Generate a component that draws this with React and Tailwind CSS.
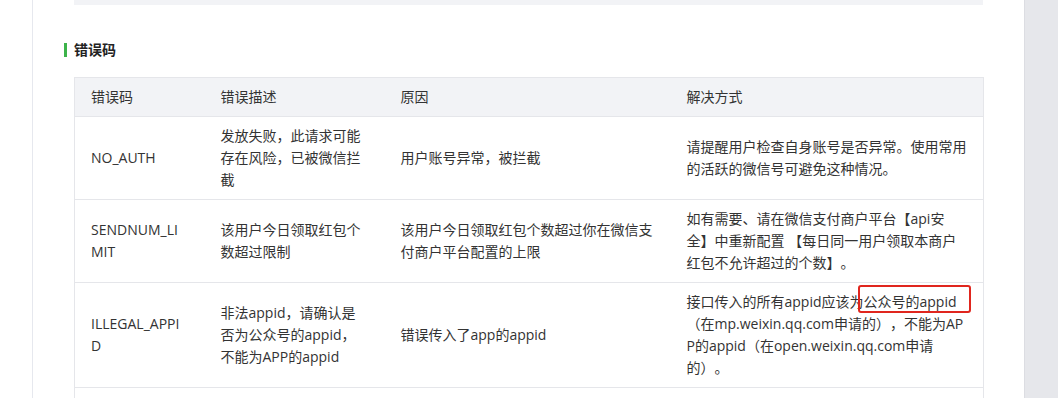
import React from 'react';

const rows = [
  {
    code: 'NO_AUTH',
    desc: '发放失败，此请求可能存在风险，已被微信拦截',
    reason: '用户账号异常，被拦截',
    fix: '请提醒用户检查自身账号是否异常。使用常用的活跃的微信号可避免这种情况。',
  },
  {
    code: 'SENDNUM_LIMIT',
    desc: '该用户今日领取红包个数超过限制',
    reason: '该用户今日领取红包个数超过你在微信支付商户平台配置的上限',
    fix: '如有需要、请在微信支付商户平台【api安全】中重新配置 【每日同一用户领取本商户红包不允许超过的个数】。',
  },
  {
    code: 'ILLEGAL_APPID',
    desc: '非法appid，请确认是否为公众号的appid，不能为APP的appid',
    reason: '错误传入了app的appid',
    fix: (
      <>
        接口传入的所有appid应该为
        <span className="relative">
          公众号的appid
          <span className="absolute -left-[6px] -right-[14px] -top-[7px] -bottom-[2px] rounded-[3px] border-2 border-[#e0261e]" />
        </span>
        （在mp.weixin.qq.com申请的），不能为APP的appid（在open.weixin.qq.com申请的）。
      </>
    ),
  },
];

const cell = 'border-y border-[#e5e6ea] px-4 py-2 align-middle break-all first:border-l last:border-r';

export default function App() {
  return (
    <div className="flex h-[398px] w-[1058px] overflow-hidden bg-white font-['Open_Sans','Noto_Sans_CJK_SC',sans-serif] text-[14px] text-[#333] [text-spacing-trim:space-all]">
      <div className="w-[32px] shrink-0" />

      {/* Main panel */}
      <div className="flex-1 border-l border-[#e6e8ee] pl-[41px] pr-[40px]">
        <div className="h-[5px] w-[909px] bg-[#f2f3f6]" />

        <div className="mt-[37px] flex items-center">
          <span className="-ml-[10px] mr-[7px] h-[14px] w-[3px] bg-[#3cb34a]" />
          <h3 className="text-[14px] font-semibold leading-[16px] text-[#222]">错误码</h3>
        </div>

        <table className="mt-[19px] w-[909px] table-fixed border-collapse leading-[22px]">
          <colgroup>
            <col className="w-[130px]" />
            <col className="w-[180px]" />
            <col className="w-[286px]" />
            <col className="w-[313px]" />
          </colgroup>
          <thead>
            <tr className="bg-[#f2f3f6] text-left">
              <th className={`${cell} font-normal`}>错误码</th>
              <th className={`${cell} font-normal`}>错误描述</th>
              <th className={`${cell} font-normal`}>原因</th>
              <th className={`${cell} font-normal`}>解决方式</th>
            </tr>
          </thead>
          <tbody>
            {rows.map((r) => (
              <tr key={r.code}>
                <td className={cell}>{r.code}</td>
                <td className={cell}>{r.desc}</td>
                <td className={cell}>{r.reason}</td>
                <td className={cell}>{r.fix}</td>
              </tr>
            ))}
            <tr>
              <td className={cell}>&nbsp;</td>
              <td className={cell}>&nbsp;</td>
              <td className={cell}>&nbsp;</td>
              <td className={cell}>&nbsp;</td>
            </tr>
          </tbody>
        </table>
      </div>

      {/* Right rail */}
      <div className="w-[34px] shrink-0 border-l border-[#dcdde2] bg-[#e6e7eb]" />
    </div>
  );
}
